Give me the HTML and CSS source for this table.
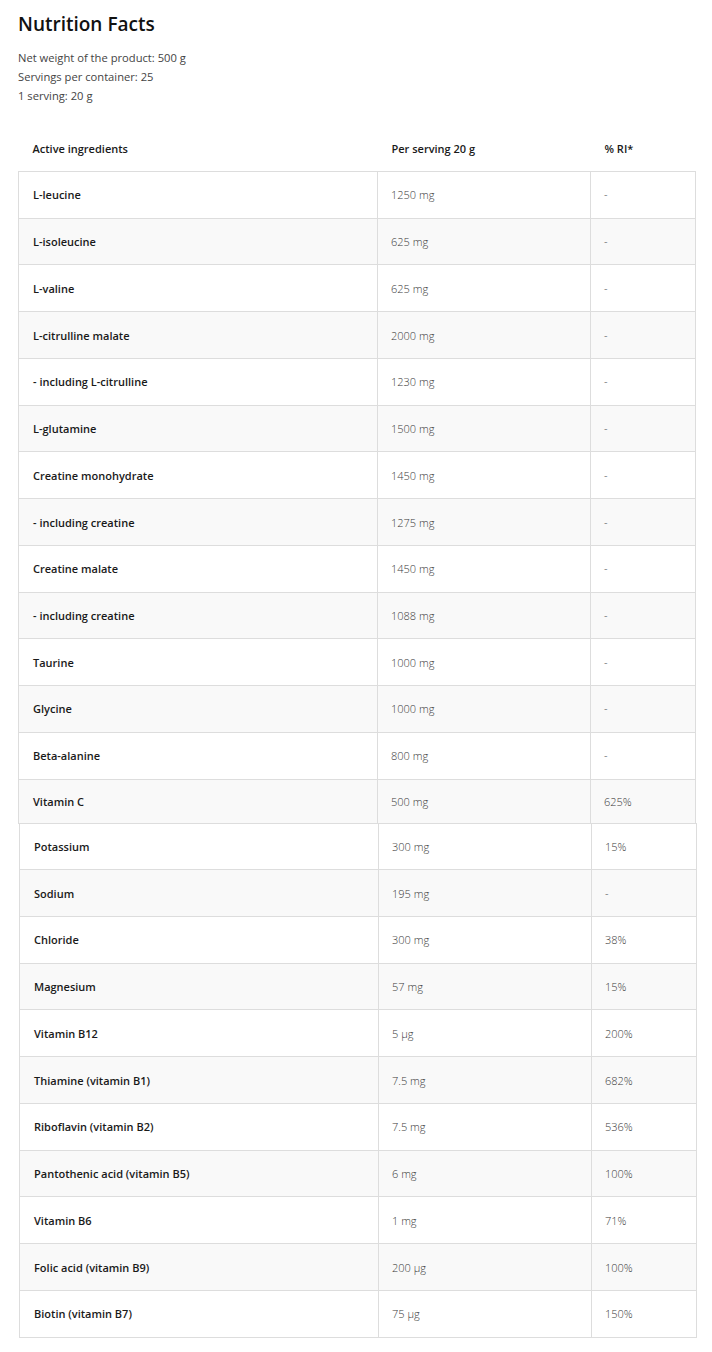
FILE: index.html
```html
<!DOCTYPE html>
<html lang="en">
<head>
<meta charset="utf-8">
<title>Nutrition Facts</title>
<link rel="stylesheet" href="styles.css">
</head>
<body>
<div class="page">
  <h2 class="title">Nutrition Facts</h2>
  <div class="meta">
    <p>Net weight of the product: 500 g</p>
    <p>Servings per container: 25</p>
    <p>1 serving: 20 g</p>
  </div>
  <table class="facts">
    <colgroup><col class="c1"><col class="c2"><col class="c3"></colgroup>
    <thead>
      <tr><th>Active ingredients</th><th>Per serving 20 g</th><th>% RI*</th></tr>
    </thead>
    <tbody>
      <tr><td>L-leucine</td><td>1250 mg</td><td>-</td></tr>
      <tr><td>L-isoleucine</td><td>625 mg</td><td>-</td></tr>
      <tr><td>L-valine</td><td>625 mg</td><td>-</td></tr>
      <tr><td>L-citrulline malate</td><td>2000 mg</td><td>-</td></tr>
      <tr><td>- including L-citrulline</td><td>1230 mg</td><td>-</td></tr>
      <tr><td>L-glutamine</td><td>1500 mg</td><td>-</td></tr>
      <tr><td>Creatine monohydrate</td><td>1450 mg</td><td>-</td></tr>
      <tr><td>- including creatine</td><td>1275 mg</td><td>-</td></tr>
      <tr><td>Creatine malate</td><td>1450 mg</td><td>-</td></tr>
      <tr><td>- including creatine</td><td>1088 mg</td><td>-</td></tr>
      <tr><td>Taurine</td><td>1000 mg</td><td>-</td></tr>
      <tr><td>Glycine</td><td>1000 mg</td><td>-</td></tr>
      <tr><td>Beta-alanine</td><td>800 mg</td><td>-</td></tr>
      <tr class="short"><td>Vitamin C</td><td>500 mg</td><td>625%</td></tr>
    </tbody>
  </table>
  <table class="facts second">
    <colgroup><col class="c1"><col class="c2"><col class="c3"></colgroup>
    <tbody>
      <tr><td>Potassium</td><td>300 mg</td><td>15%</td></tr>
      <tr><td>Sodium</td><td>195 mg</td><td>-</td></tr>
      <tr><td>Chloride</td><td>300 mg</td><td>38%</td></tr>
      <tr><td>Magnesium</td><td>57 mg</td><td>15%</td></tr>
      <tr><td>Vitamin B12</td><td>5 µg</td><td>200%</td></tr>
      <tr><td>Thiamine (vitamin B1)</td><td>7.5 mg</td><td>682%</td></tr>
      <tr><td>Riboflavin (vitamin B2)</td><td>7.5 mg</td><td>536%</td></tr>
      <tr><td>Pantothenic acid (vitamin B5)</td><td>6 mg</td><td>100%</td></tr>
      <tr><td>Vitamin B6</td><td>1 mg</td><td>71%</td></tr>
      <tr><td>Folic acid (vitamin B9)</td><td>200 µg</td><td>100%</td></tr>
      <tr><td>Biotin (vitamin B7)</td><td>75 µg</td><td>150%</td></tr>
    </tbody>
  </table>
</div>
</body>
</html>
```
FILE: styles.css
```css
html, body {
  margin: 0;
  padding: 0;
  background: #ffffff;
}
body {
  font-family: "Open Sans", "Liberation Sans", sans-serif;
  color: #1a1a1a;
}
.page {
  padding: 12px 18px 0 18px;
}
.title {
  margin: 0;
  font-size: 19px;
  line-height: 24px;
  font-weight: 600;
  color: #111111;
}
.meta {
  margin-top: 12px;
}
.meta p {
  margin: 0;
  font-size: 11.2px;
  line-height: 19px;
  color: #444444;
}
.facts {
  border-collapse: collapse;
  width: 677px;
  table-layout: fixed;
  font-size: 11px;
}
.facts:first-of-type {
  margin-top: 20px;
}
.c1 { width: 359px; }
.c2 { width: 213px; }
.c3 { width: 105px; }
.facts th {
  text-align: left;
  font-weight: 600;
  color: #1a1a1a;
  height: 46px;
  padding: 0 14px;
}
.facts td {
  border: 1px solid #dddddd;
  height: 45.74px;
  padding: 0 13px;
  color: #3a3a3a;
  font-weight: 300;
}
.facts td:first-child {
  font-weight: 600;
  color: #1a1a1a;
  padding-left: 14px;
}
.facts tbody tr:nth-child(even) td {
  background: #f9f9f9;
}
.facts tr.short td {
  height: 43px;
}
.facts.second {
  margin-left: 1px;
  margin-top: -1px;
}
```
